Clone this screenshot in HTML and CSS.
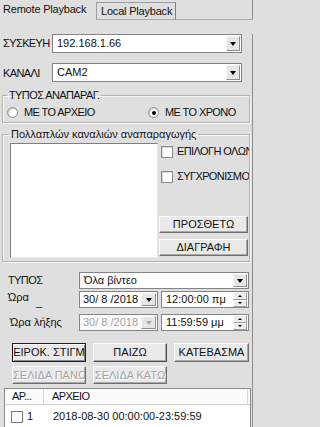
FILE: index.html
```html
<!DOCTYPE html>
<html lang="el">
<head>
<meta charset="utf-8">
<title>Playback</title>
<link rel="stylesheet" href="styles.css">
</head>
<body>
<div class="tabs">
  <div class="tab-active">Remote Playback</div>
  <div class="tab">Local Playback</div>
  <div class="tab-fill"></div>
</div>
<div class="panel">
  <div class="row row-dev">
    <span class="lbl-top caps">ΣΥΣΚΕΥΗ</span>
    <div class="combo combo-top"><span class="val">192.168.1.66</span><span class="dd"><i class="tri"></i></span></div>
  </div>
  <div class="row row-ch">
    <span class="lbl-top lbl-ch caps">ΚΑΝΑΛΙ</span>
    <div class="combo combo-top"><span class="val">CAM2</span><span class="dd"><i class="tri"></i></span></div>
  </div>

  <fieldset class="grp grp-type">
    <legend class="caps">ΤΥΠΟΣ ΑΝΑΠΑΡΑΓ.</legend>
    <div class="radios caps">
      <label class="opt opt1"><span class="radio"></span>ΜΕ ΤΟ ΑΡΧΕΙΟ</label>
      <label class="opt"><span class="radio on"></span>ΜΕ ΤΟ ΧΡΟΝΟ</label>
    </div>
  </fieldset>

  <fieldset class="grp grp-multi">
    <legend>Πολλαπλών καναλιών αναπαραγωγής</legend>
    <div class="multi">
      <div class="listbox"></div>
      <div class="side caps">
        <label class="chk chk1"><span class="box"></span>ΕΠΙΛΟΓΗ ΟΛΩΝ</label>
        <label class="chk chk2"><span class="box"></span>ΣΥΓΧΡΟΝΙΣΜΟΣ</label>
        <button class="btn btn-add">ΠΡΟΣΘΕΤΩ</button>
        <button class="btn btn-del">ΔΙΑΓΡΑΦΗ</button>
      </div>
    </div>
  </fieldset>

  <div class="lrow lrow-type">
    <span class="lbl caps">ΤΥΠΟΣ</span>
    <div class="combo combo-wide"><span class="val">Όλα βίντεο</span><span class="dd"><i class="tri"></i></span></div>
  </div>
  <div class="lrow lrow-start">
    <span class="lbl">Ώρα <span class="under">_</span></span>
    <div class="combo date"><span class="val">30/ 8 /2018</span><span class="dd"><i class="tri"></i></span></div>
    <div class="time"><span class="val">12:00:00 πμ</span><span class="spin"><span class="sp"><i class="up"></i></span><span class="sp"><i class="down"></i></span></span></div>
  </div>
  <div class="lrow lrow-end">
    <span class="lbl lbl-end">Ώρα λήξης</span>
    <div class="combo date disabled"><span class="val">30/ 8 /2018</span><span class="dd"><i class="tri"></i></span></div>
    <div class="time"><span class="val">11:59:59 μμ</span><span class="spin"><span class="sp"><i class="up"></i></span><span class="sp"><i class="down"></i></span></span></div>
  </div>

  <div class="brow brow1 caps">
    <button class="btn btn-def">ΕΙΡΟΚ. ΣΤΙΓΜ</button>
    <button class="btn btn-play">ΠΑΙΖΩ</button>
    <button class="btn btn-dl">ΚΑΤΕΒΑΣΜΑ</button>
  </div>
  <div class="brow brow2 caps">
    <button class="btn btn-pg" disabled>ΣΕΛΙΔΑ ΠΑΝΩ</button>
    <button class="btn btn-pg" disabled>ΣΕΛΙΔΑ ΚΑΤΩ</button>
  </div>

  <div class="listview">
    <div class="lv-head caps">
      <span class="col1">ΑΡ...</span>
      <span class="col2">ΑΡΧΕΙΟ</span>
    </div>
    <div class="lv-row">
      <span class="col1"><span class="box"></span>1</span>
      <span class="col2">2018-08-30 00:00:00-23:59:59</span>
    </div>
  </div>
</div>
</body>
</html>
```

FILE: styles.css
```css
* { box-sizing: border-box; }
html, body { margin: 0; padding: 0; }
body {
  width: 258px;
  height: 427px;
  overflow: hidden;
  background: #dfdfdf;
  font-family: "Liberation Sans", Arial, sans-serif;
  font-size: 11px;
  line-height: 13px;
  color: #111;
}
.caps { letter-spacing: -0.6px; }

/* tabs */
.tabs { display: flex; height: 20px; }
.tab-active { width: 96px; height: 20px; padding: 3px 0 0 3px; white-space: nowrap; letter-spacing: -0.2px; }
.tab {
  width: 80px; height: 18px; margin-top: 2px;
  border: 1px solid #9c9c9c; border-bottom-color: #a8a8a8; border-right-color: #7d7d7d;
  padding: 2px 0 0 4px; white-space: nowrap; letter-spacing: -0.2px;
}
.tab-fill { width: 77px; height: 20px; border-bottom: 1px solid #a8a8a8; border-right: 1px solid #8e8e8e; }

.panel { width: 253px; height: 407px; border-right: 1px solid #8e8e8e; }

/* top rows */
.row { display: flex; align-items: center; height: 19px; }
.row-dev { margin-top: 14px; }
.row-ch { margin-top: 10px; }
.lbl-top { width: 52px; padding-left: 3px; white-space: nowrap; }
.lbl-ch { padding-top: 2px; }

.combo {
  display: flex; align-items: stretch;
  background: #fff; border: 1px solid #848484;
}
.combo .val { flex: 1; padding-left: 4px; white-space: nowrap; overflow: hidden; display: flex; align-items: center; }
.combo-top { width: 190px; height: 19px; }
.dd {
  width: 14px; margin: 1px;
  background: #e6e6e6;
  border: 1px solid; border-color: #f6f6f6 #8f8f8f #8f8f8f #f6f6f6;
  display: flex; align-items: center; justify-content: center;
}
.tri {
  display: block; width: 1px; height: 0;
  border-left: 3px solid transparent; border-right: 3px solid transparent;
  border-top: 4px solid #000;
  margin-top: 1px;
}

/* group boxes */
.grp {
  margin: 0 0 0 2px; padding: 0; width: 248px; min-width: 0;
  border: 1px solid #b1b1b1;
  box-shadow: inset 1px 1px 0 #f8f8f8, 1px 1px 0 #f8f8f8;
}
.grp legend { padding: 0 2px; line-height: 13px; height: 13px; white-space: nowrap; }
.grp-type { margin-top: 7px; }
.grp-type legend { margin-left: 4px; }
.grp-multi { margin-top: 5px; }
.grp-multi legend { margin-left: 6px; }

.radios { display: flex; align-items: center; height: 13px; margin: 4px 0 3px 4px; }
.opt { display: flex; align-items: center; white-space: nowrap; }
.opt1 { width: 141px; }
.radio {
  width: 11px; height: 11px; margin-right: 6px;
  border-radius: 50%; background: #fff;
  border: 1px solid #8d8d8d;
  box-shadow: inset 1px 1px 1px #c8c8c8;
  display: flex; align-items: center; justify-content: center;
}
.radio.on::after { content: ""; width: 4px; height: 4px; border-radius: 50%; background: #000; }

.multi { display: flex; margin: 2px 0 3px 7px; }
.listbox {
  width: 148px; height: 115px; background: #fff;
  border: 1px solid; border-color: #7e7e7e #e8e8e8 #e8e8e8 #7e7e7e;
}
.side { width: 90px; margin-left: 1px; display: flex; flex-direction: column; overflow: hidden; }
.chk { display: flex; align-items: center; height: 13px; margin-left: 2px; white-space: nowrap; }
.chk1 { margin-top: 2px; }
.chk2 { margin-top: 12px; }
.box {
  flex: none; width: 12px; height: 12px; margin-right: 3px;
  background: #fff; border: 1px solid #8c8c8c;
  box-shadow: inset 1px 1px 0 #d6d6d6;
}
.chk .box { margin-right: 4px; }

.btn {
  font: inherit; color: #111; padding: 0; margin: 0;
  background: #e9e9e9;
  border: 1px solid; border-color: #fdfdfd #6f6f6f #6f6f6f #fdfdfd;
  box-shadow: inset -1px -1px 0 #a9a9a9;
  white-space: nowrap; overflow: hidden;
}
.btn-add { width: 89px; height: 17px; margin-top: 33px; }
.btn-del { width: 89px; height: 17px; margin-top: 6px; }

/* lower rows */
.lrow { display: flex; align-items: center; height: 17px; padding-left: 8px; }
.lrow-type { margin-top: 10px; }
.lrow-start { margin-top: 2px; }
.lrow-end { margin-top: 6px; }
.lbl { width: 71px; white-space: nowrap; }
.lbl-end { padding-left: 2px; }
.under { display: inline-block; margin-left: 4px; vertical-align: -5px; }
.combo-wide { width: 170px; height: 17px; }
.date { width: 79px; height: 17px; }
.date .dd { width: 15px; }
.date .val { padding-left: 3px; }
.disabled { color: #a4a4a4; background: #fafafa; }
.disabled .tri { border-top-color: #a8a8a8; }
.time {
  display: flex; width: 88px; height: 17px; margin-left: 3px;
  background: #fff; border: 1px solid #848484;
}
.time .val { flex: 1; padding-left: 4px; display: flex; align-items: center; white-space: nowrap; }
.spin { width: 14px; display: flex; flex-direction: column; margin: 0 1px 0 0; }
.sp {
  flex: 1; display: flex; align-items: center; justify-content: center;
  background: #ececec; border: 1px solid; border-color: #fbfbfb #a0a0a0 #a0a0a0 #fbfbfb;
}
.up, .down { display: block; width: 1px; height: 0; border-left: 2px solid transparent; border-right: 2px solid transparent; }
.up { border-bottom: 2px solid #000; }
.down { border-top: 2px solid #000; }

/* button rows */
.brow { display: flex; padding-left: 12px; gap: 7px; }
.brow1 { margin-top: 12px; height: 19px; }
.brow2 { margin-top: 4px; height: 18px; }
.btn-def { width: 74px; border: 1px solid #1f1f1f; box-shadow: inset 1px 1px 0 #fdfdfd, inset -1px -1px 0 #8a8a8a; }
.btn-play { width: 74px; border-color: #fdfdfd #4a4a4a #4a4a4a #fdfdfd; }
.btn-dl { width: 75px; }
.btn-pg { width: 74px; color: #a3a3a3; text-shadow: 1px 1px 0 #fff; }

/* list view */
.listview {
  margin: 4px 0 0 4px; width: 247px; height: 45px;
  background: #fff; border: 1px solid #8a8a8a;
}
.lv-head { display: flex; height: 16px; background: #fbfbfb; border-bottom: 1px solid #d0d0d0; align-items: center; }
.lv-head .col1 { width: 39px; padding-left: 7px; border-right: 1px solid #dadada; height: 15px; display: flex; align-items: center; }
.lv-head .col2 { width: 204px; padding-left: 8px; border-right: 1px solid #dadada; height: 15px; display: flex; align-items: center; }
.lv-row { display: flex; align-items: center; height: 20px; padding-top: 3px; }
.lv-row .col1 { width: 48px; padding-left: 6px; display: flex; align-items: center; }
.lv-row .col1 .box { width: 12px; height: 12px; margin-right: 4px; border-color: #7c7c7c; box-shadow: none; }
.lv-row .col2 { white-space: nowrap; }
```
